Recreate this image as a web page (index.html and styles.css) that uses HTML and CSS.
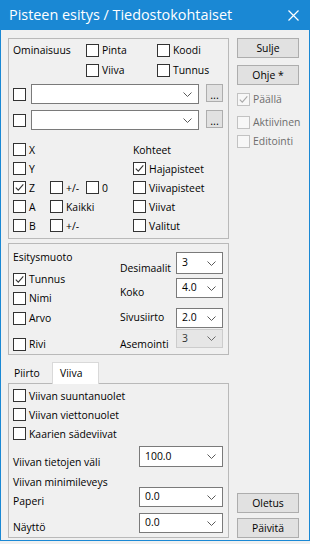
FILE: index.html
```html
<!DOCTYPE html>
<html lang="fi">
<head>
<meta charset="utf-8">
<link rel="stylesheet" href="styles.css">
</head>
<body>
<div class="window">
  <div class="titlebar">
    <span class="title">Pisteen esitys / Tiedostokohtaiset</span>
    <svg class="close" width="11" height="11" viewBox="0 0 11 11"><path d="M0.5 0.5 L10.5 10.5 M10.5 0.5 L0.5 10.5" stroke="#fff" stroke-width="1.2" fill="none"/></svg>
  </div>
  <div class="content">
    <div class="left">
      <div class="group g1">
        <div class="g1-top">
          <span class="lbl">Ominaisuus</span>
          <label class="chk"><span class="cb"></span>Pinta</label>
          <label class="chk"><span class="cb"></span>Koodi</label>
          <span></span>
          <label class="chk"><span class="cb"></span>Viiva</label>
          <label class="chk"><span class="cb"></span>Tunnus</label>
        </div>
        <div class="combo-row first">
          <span class="cb"></span>
          <div class="combo wide"><svg class="chev" width="9" height="5" viewBox="0 0 9 5"><path d="M0.5 0.5 L4.5 4.5 L8.5 0.5" stroke="#5a5a5a" fill="none"/></svg></div>
          <div class="btn dots">...</div>
        </div>
        <div class="combo-row second">
          <span class="cb"></span>
          <div class="combo wide"><svg class="chev" width="9" height="5" viewBox="0 0 9 5"><path d="M0.5 0.5 L4.5 4.5 L8.5 0.5" stroke="#5a5a5a" fill="none"/></svg></div>
          <div class="btn dots">...</div>
        </div>
        <div class="xyz">
          <label class="chk"><span class="cb"></span>X</label>
          <span></span><span></span>
          <span class="lbl">Kohteet</span>

          <label class="chk"><span class="cb"></span>Y</label>
          <span></span><span></span>
          <label class="chk"><span class="cb"><svg viewBox="0 0 11 11"><path d="M1.8 5.6 L4.3 8.2 L9.3 2.4" stroke="#333" stroke-width="1.1" fill="none"/></svg></span>Hajapisteet</label>

          <label class="chk"><span class="cb"><svg viewBox="0 0 11 11"><path d="M1.8 5.6 L4.3 8.2 L9.3 2.4" stroke="#333" stroke-width="1.1" fill="none"/></svg></span>Z</label>
          <label class="chk"><span class="cb"></span>+/-</label>
          <label class="chk"><span class="cb"></span>0</label>
          <label class="chk"><span class="cb"></span>Viivapisteet</label>

          <label class="chk"><span class="cb"></span>A</label>
          <label class="chk"><span class="cb"></span>Kaikki</label>
          <span></span>
          <label class="chk"><span class="cb"></span>Viivat</label>

          <label class="chk"><span class="cb"></span>B</label>
          <label class="chk"><span class="cb"></span>+/-</label>
          <span></span>
          <label class="chk"><span class="cb"></span>Valitut</label>
        </div>
      </div>

      <div class="group g2">
        <div class="g2-left">
          <div class="lbl esit">Esitysmuoto</div>
          <label class="chk r-tunnus"><span class="cb"><svg viewBox="0 0 11 11"><path d="M1.8 5.6 L4.3 8.2 L9.3 2.4" stroke="#333" stroke-width="1.1" fill="none"/></svg></span>Tunnus</label>
          <label class="chk r-nimi"><span class="cb"></span>Nimi</label>
          <label class="chk r-arvo"><span class="cb"></span>Arvo</label>
          <label class="chk r-rivi"><span class="cb"></span>Rivi</label>
        </div>
        <div class="g2-right">
          <div class="frow r1"><span class="flbl">Desimaalit</span><div class="combo small"><span class="val">3</span><svg class="chev" width="9" height="5" viewBox="0 0 9 5"><path d="M0.5 0.5 L4.5 4.5 L8.5 0.5" stroke="#5a5a5a" fill="none"/></svg></div></div>
          <div class="frow r2"><span class="flbl">Koko</span><div class="combo small"><span class="val">4.0</span><svg class="chev" width="9" height="5" viewBox="0 0 9 5"><path d="M0.5 0.5 L4.5 4.5 L8.5 0.5" stroke="#5a5a5a" fill="none"/></svg></div></div>
          <div class="frow r3"><span class="flbl">Sivusiirto</span><div class="combo small"><span class="val">2.0</span><svg class="chev" width="9" height="5" viewBox="0 0 9 5"><path d="M0.5 0.5 L4.5 4.5 L8.5 0.5" stroke="#5a5a5a" fill="none"/></svg></div></div>
          <div class="frow r4"><span class="flbl">Asemointi</span><div class="combo small disabled"><span class="val">3</span><svg class="chev" width="9" height="5" viewBox="0 0 9 5"><path d="M0.5 0.5 L4.5 4.5 L8.5 0.5" stroke="#6a6a6a" fill="none"/></svg></div></div>
        </div>
      </div>

      <div class="tabs">
        <div class="tab">Piirto</div>
        <div class="tab active">Viiva</div>
      </div>
      <div class="panel">
        <label class="chk prow"><span class="cb"></span>Viivan suuntanuolet</label>
        <label class="chk prow"><span class="cb"></span>Viivan viettonuolet</label>
        <label class="chk prow"><span class="cb"></span>Kaarien sädeviivat</label>
        <div class="frow p1"><span class="plbl">Viivan tietojen väli</span><div class="combo med"><span class="val">100.0</span><svg class="chev" width="9" height="5" viewBox="0 0 9 5"><path d="M0.5 0.5 L4.5 4.5 L8.5 0.5" stroke="#5a5a5a" fill="none"/></svg></div></div>
        <div class="frow p2"><span class="plbl">Viivan minimileveys</span></div>
        <div class="frow p3"><span class="plbl">Paperi</span><div class="combo med"><span class="val">0.0</span><svg class="chev" width="9" height="5" viewBox="0 0 9 5"><path d="M0.5 0.5 L4.5 4.5 L8.5 0.5" stroke="#5a5a5a" fill="none"/></svg></div></div>
        <div class="frow p4"><span class="plbl">Näyttö</span><div class="combo med"><span class="val">0.0</span><svg class="chev" width="9" height="5" viewBox="0 0 9 5"><path d="M0.5 0.5 L4.5 4.5 L8.5 0.5" stroke="#5a5a5a" fill="none"/></svg></div></div>
      </div>
    </div>

    <div class="right">
      <div class="btn wbtn">Sulje</div>
      <div class="btn wbtn ohje">Ohje *</div>
      <label class="chk dis paalla"><span class="cb"><svg viewBox="0 0 11 11"><path d="M1.8 5.6 L4.3 8.2 L9.3 2.4" stroke="#a8a8a8" stroke-width="1.1" fill="none"/></svg></span>Päällä</label>
      <label class="chk dis akt"><span class="cb"></span>Aktiivinen</label>
      <label class="chk dis edit"><span class="cb"></span>Editointi</label>
      <div class="btn wbtn oletus">Oletus</div>
      <div class="btn wbtn paivita">Päivitä</div>
    </div>
  </div>
</div>
</body>
</html>
```

FILE: styles.css
```css
html, body {
  margin: 0;
  padding: 0;
  background: #f0f0f0;
}
body {
  font-family: "Open Sans", "Noto Sans", sans-serif;
  font-size: 10.4px;
  color: #000;
}
.window {
  width: 310px;
  box-sizing: border-box;
  border: 1px solid #1a88d4;
  border-top: none;
  background: #f0f0f0;
}
.titlebar {
  height: 30px;
  background: #1a88d4;
  display: flex;
  align-items: center;
  padding-left: 8px;
  padding-right: 10px;
  box-sizing: border-box;
}
.title {
  color: #fff;
  font-size: 14.4px;
  flex: 1;
  white-space: nowrap;
  margin-top: -1px;
}
.close { display: block; }

.content {
  display: flex;
  gap: 8px;
  padding: 8px 0 2px 7px;
}
.left {
  width: 221px;
  display: flex;
  flex-direction: column;
}
.right {
  width: 62px;
  display: flex;
  flex-direction: column;
}

.group {
  border: 1px solid #b9b9b9;
  box-sizing: border-box;
}
.g1 {
  height: 201px;
  padding: 1px 5px 0 4px;
}
.g2 {
  height: 112px;
  margin-top: 4px;
  display: flex;
  padding-left: 4px;
}

.lbl { white-space: nowrap; line-height: 16px; }

.chk {
  display: flex;
  align-items: center;
  gap: 3px;
  white-space: nowrap;
  line-height: 16px;
}
.cb {
  width: 13px;
  height: 13px;
  box-sizing: border-box;
  border: 1px solid #333;
  background: #fff;
  flex: none;
  display: block;
}
.cb svg { display: block; width: 11px; height: 11px; }
.chk.dis { color: #6d6d6d; }
.chk.dis .cb { border-color: #c2c2c2; background: #f7f7f7; }

.g1-top {
  display: grid;
  grid-template-columns: 73px 71px auto;
  grid-auto-rows: 20px;
  align-items: center;
}
.combo-row {
  display: flex;
  align-items: flex-start;
  height: 20px;
}
.combo-row .cb { margin-top: 4px; }
.combo-row.first { margin-top: 4px; }
.combo-row.second { margin-top: 6px; }
.combo {
  height: 20px;
  box-sizing: border-box;
  border: 1px solid #7a7a7a;
  background: #fff;
  display: flex;
  align-items: center;
  padding-left: 5px;
  flex: none;
}
.combo .chev { margin-left: auto; margin-right: 6px; display: block; }
.combo .val { line-height: 16px; margin-top: -2px; }
.combo.wide { width: 168px; margin-left: 5px; }
.combo.small { width: 47px; }
.combo.med { width: 84px; margin-left: auto; }
.combo.disabled { background: #e6e6e6; border-color: #cccccc; color: #333; }

.btn {
  background: #e1e1e1;
  border: 1px solid #adadad;
  box-sizing: border-box;
  display: flex;
  align-items: center;
  justify-content: center;
  white-space: nowrap;
}
.btn.dots {
  width: 17px;
  height: 18px;
  margin-left: 7px;
  padding-top: 3px;
  font-size: 11px;
}

.xyz {
  margin-top: 10px;
  display: grid;
  grid-template-columns: 37px 36px 47px auto;
  grid-auto-rows: 19px;
  align-items: center;
}

.g2-left {
  width: 107px;
  display: flex;
  flex-direction: column;
}
.esit { margin-top: 5px; }
.r-tunnus { margin-top: 6px; }
.r-nimi { margin-top: 3px; }
.r-arvo { margin-top: 4px; }
.r-rivi { margin-top: 10px; }

.g2-right {
  display: flex;
  flex-direction: column;
}
.frow {
  display: flex;
  align-items: flex-start;
}
.flbl {
  width: 56px;
  line-height: 16px;
  white-space: nowrap;
}
.r1 { margin-top: 8px; height: 22px; }
.r1 .combo { height: 22px; }
.r1 .flbl { padding-top: 8px; }
.r2 { margin-top: 4px; height: 20px; }
.r2 .flbl { padding-top: 6px; }
.r3 { margin-top: 10px; height: 20px; }
.r3 .flbl { padding-top: 1px; }
.r4 { margin-top: 1px; height: 19px; }
.r4 .combo { height: 19px; }
.r4 .flbl { padding-top: 7px; }

.tabs {
  margin-top: 8px;
  display: flex;
  align-items: flex-end;
  height: 20px;
  padding-left: 2px;
}
.tab {
  height: 18px;
  line-height: 16px;
  padding: 0 7px 0 4px;
  box-sizing: border-box;
  width: 42px;
}
.tab.active {
  width: 47px;
  height: 22px;
  padding: 2px 0 0 7px;
  background: #fff;
  border: 1px solid #d9d9d9;
  border-bottom: none;
  margin-bottom: -1px;
  position: relative;
  z-index: 1;
}
.panel {
  border: 1px solid #b9b9b9;
  height: 155px;
  box-sizing: border-box;
  padding: 2px 5px 0 4px;
  display: flex;
  flex-direction: column;
}
.prow { height: 19px; flex: none; }
.plbl { line-height: 16px; white-space: nowrap; }
.p1 { margin-top: 3px; height: 21px; flex: none; }
.p1 .combo { height: 21px; }
.p1 .plbl { padding-top: 8px; }
.p2 { height: 20px; flex: none; }
.p2 .plbl { padding-top: 7px; }
.p3 { height: 20px; flex: none; }
.p3 .plbl { padding-top: 6px; }
.p4 { margin-top: 6px; height: 20px; flex: none; }
.p4 .plbl { padding-top: 6px; }

.wbtn { height: 20px; width: 62px; flex: none; }
.ohje { margin-top: 7px; }
.paalla { margin-top: 6px; }
.akt { margin-top: 7px; }
.edit { margin-top: 3px; }
.oletus { margin-top: auto; }
.paivita { margin-top: 5px; }
```
